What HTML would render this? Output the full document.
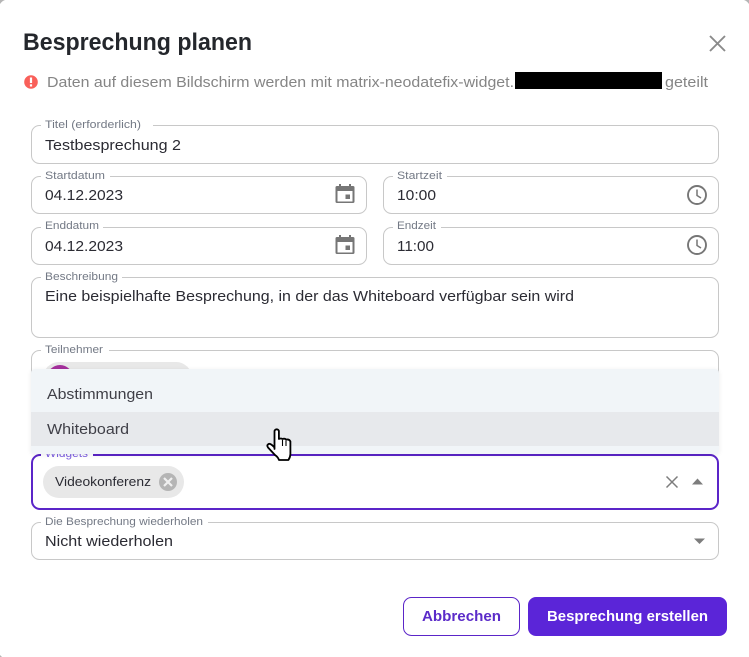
<!DOCTYPE html>
<html lang="de"><head><meta charset="utf-8"><title>Besprechung planen</title>
<style>
html,body{margin:0;padding:0;background:#fff;width:749px;height:657px;overflow:hidden}
svg{position:absolute;left:0;top:0;display:block}
text{font-family:"Liberation Sans",sans-serif}
.box{fill:#fff;stroke:#c8c8c8;stroke-width:1}
.lab{font-size:11px;fill:#737985}
.val{font-size:15px;fill:#2b2b33}
.ic{fill:#767676}
</style></head><body>
<svg width="749" height="657" viewBox="0 0 749 657" xmlns="http://www.w3.org/2000/svg">
<rect width="749" height="657" fill="#fff"/>
<path d="M0 0h5q-3 1-5 4zM749 0h-5q3 1 5 4zM0 657v-2l2 2z" fill="#b5b5b5"/>

<text x="23" y="50" font-size="24" font-weight="700" fill="#24272c" textLength="229" lengthAdjust="spacingAndGlyphs">Besprechung planen</text>
<path d="M710 36l15 15M725 36l-15 15" stroke="#8a8a8a" stroke-width="1.900" fill="none"/>

<circle cx="31" cy="82" r="6.800" fill="#f9605a"/>
<rect x="29.900" y="77.500" width="2.200" height="5.500" fill="#fff"/><rect x="29.900" y="84.300" width="2.200" height="2.200" fill="#fff"/>
<text x="47" y="87" font-size="15" fill="#858585" textLength="467" lengthAdjust="spacingAndGlyphs">Daten auf diesem Bildschirm werden mit matrix-neodatefix-widget.</text>
<rect x="515" y="72" width="147" height="17" fill="#000"/>
<text x="665" y="87" font-size="15" fill="#858585" textLength="43" lengthAdjust="spacingAndGlyphs">geteilt</text>

<!-- Titel -->
<rect class="box" x="31.500" y="125.500" width="687" height="38" rx="8"/>
<rect x="41" y="120" width="112" height="10" fill="#fff"/>
<text class="lab" x="45" y="128" textLength="96" lengthAdjust="spacingAndGlyphs">Titel (erforderlich)</text>
<text class="val" x="45" y="150" textLength="136" lengthAdjust="spacingAndGlyphs">Testbesprechung 2</text>

<!-- Startdatum -->
<rect class="box" x="31.500" y="176.500" width="335" height="37" rx="8"/>
<rect x="41" y="171" width="69" height="10" fill="#fff"/>
<text class="lab" x="45" y="179" textLength="60" lengthAdjust="spacingAndGlyphs">Startdatum</text>
<text class="val" x="45" y="200" textLength="78" lengthAdjust="spacingAndGlyphs">04.12.2023</text>
<path class="ic" d="M339 184h2v2h8v-2h2v2h2a1.500 1.500 0 0 1 1.500 1.500v14a1.500 1.500 0 0 1-1.500 1.500h-16a1.500 1.500 0 0 1-1.500-1.500v-14a1.500 1.500 0 0 1 1.500-1.500h2zM337.500 191v10.500h15V191z" fill-rule="evenodd"/>
<rect class="ic" x="345.500" y="194.500" width="4.500" height="4.500"/>

<!-- Startzeit -->
<rect class="box" x="383.500" y="176.500" width="335" height="37" rx="8"/>
<rect x="393" y="171" width="54" height="10" fill="#fff"/>
<text class="lab" x="397" y="179" textLength="45" lengthAdjust="spacingAndGlyphs">Startzeit</text>
<text class="val" x="397" y="200" textLength="39" lengthAdjust="spacingAndGlyphs">10:00</text>
<circle cx="697" cy="195" r="9" fill="none" stroke="#767676" stroke-width="1.900"/>
<path d="M697 189.500v6l4 2.500" fill="none" stroke="#767676" stroke-width="1.500"/>

<!-- Enddatum -->
<rect class="box" x="31.500" y="227.500" width="335" height="37" rx="8"/>
<rect x="41" y="222" width="62" height="10" fill="#fff"/>
<text class="lab" x="45" y="229" textLength="54" lengthAdjust="spacingAndGlyphs">Enddatum</text>
<text class="val" x="45" y="251" textLength="78" lengthAdjust="spacingAndGlyphs">04.12.2023</text>
<g transform="translate(0 51)">
<path class="ic" d="M339 184h2v2h8v-2h2v2h2a1.500 1.500 0 0 1 1.500 1.500v14a1.500 1.500 0 0 1-1.500 1.500h-16a1.500 1.500 0 0 1-1.500-1.500v-14a1.500 1.500 0 0 1 1.500-1.500h2zM337.500 191v10.500h15V191z" fill-rule="evenodd"/>
<rect class="ic" x="345.500" y="194.500" width="4.500" height="4.500"/>
</g>

<!-- Endzeit -->
<rect class="box" x="383.500" y="227.500" width="335" height="37" rx="8"/>
<rect x="393" y="222" width="48" height="10" fill="#fff"/>
<text class="lab" x="397" y="229" textLength="39" lengthAdjust="spacingAndGlyphs">Endzeit</text>
<text class="val" x="397" y="251" textLength="37" lengthAdjust="spacingAndGlyphs">11:00</text>
<circle cx="697" cy="245" r="9" fill="none" stroke="#767676" stroke-width="1.900"/>
<path d="M697 239.500v6l4 2.500" fill="none" stroke="#767676" stroke-width="1.500"/>

<!-- Beschreibung -->
<rect class="box" x="31.500" y="277.500" width="687" height="60" rx="8"/>
<rect x="41" y="272" width="81" height="10" fill="#fff"/>
<text class="lab" x="45" y="280" textLength="73" lengthAdjust="spacingAndGlyphs">Beschreibung</text>
<text class="val" x="45" y="301" textLength="529" lengthAdjust="spacingAndGlyphs">Eine beispielhafte Besprechung, in der das Whiteboard verfügbar sein wird</text>

<!-- Teilnehmer -->
<rect class="box" x="31.500" y="350.500" width="687" height="60" rx="8"/>
<rect x="41" y="345" width="68" height="10" fill="#fff"/>
<text class="lab" x="45" y="353" textLength="58" lengthAdjust="spacingAndGlyphs">Teilnehmer</text>
<rect x="43" y="362" width="149" height="32" rx="16" fill="#e8e8e8"/>
<circle cx="60" cy="378" r="13" fill="#a4309c"/>

<!-- Widgets -->
<rect x="32" y="455" width="686" height="54" rx="8" fill="#fff" stroke="#5b25c8" stroke-width="2"/>
<rect x="41" y="448" width="52" height="10" fill="#fff"/>
<text x="45" y="457" font-size="11" fill="#7a5ce0" textLength="43" lengthAdjust="spacingAndGlyphs">Widgets</text>
<rect x="43" y="466" width="141" height="32" rx="16" fill="#e8e8e8"/>
<text x="55" y="486" font-size="13" fill="#2b2b33" textLength="96" lengthAdjust="spacingAndGlyphs">Videokonferenz</text>
<circle cx="168" cy="482" r="9" fill="#b5b5b5"/>
<path d="M164 478l8 8M172 478l-8 8" stroke="#f0f0f0" stroke-width="2.200"/>
<path d="M666.500 476.500l11 11M677.500 476.500l-11 11" stroke="#7d7d7d" stroke-width="1.500"/>
<path d="M692 484.500l5.500-6 5.500 6z" fill="#7d7d7d"/>

<!-- Popup -->
<rect x="31" y="369" width="688" height="85" rx="4" fill="#f1f5f8" style="filter:drop-shadow(0 1px 2px rgba(0,0,0,.08))"/>
<rect x="31" y="412" width="688" height="34" fill="#e7e9ec"/>
<text x="47" y="399" font-size="15" fill="#3f3f47" textLength="106" lengthAdjust="spacingAndGlyphs">Abstimmungen</text>
<text x="47" y="434" font-size="15" fill="#3f3f47" textLength="82" lengthAdjust="spacingAndGlyphs">Whiteboard</text>

<!-- Wiederholen -->
<rect class="box" x="31.500" y="522.500" width="687" height="37" rx="8"/>
<rect x="41" y="517" width="167" height="10" fill="#fff"/>
<text class="lab" x="45" y="525" textLength="158" lengthAdjust="spacingAndGlyphs">Die Besprechung wiederholen</text>
<text class="val" x="45" y="546" textLength="128" lengthAdjust="spacingAndGlyphs">Nicht wiederholen</text>
<path d="M694 538.500l5.500 5.500 5.500-5.500z" fill="#7d7d7d"/>

<!-- Buttons -->
<rect x="403.500" y="597.500" width="116" height="38" rx="8" fill="#fff" stroke="#5b25c8"/>
<text x="422" y="621" font-size="15" font-weight="700" fill="#5b2bc9" textLength="79" lengthAdjust="spacingAndGlyphs">Abbrechen</text>
<rect x="528" y="597" width="199" height="39" rx="8" fill="#5b25d8"/>
<text x="547" y="621" font-size="15" font-weight="700" fill="#fff" textLength="161" lengthAdjust="spacingAndGlyphs">Besprechung erstellen</text>

<!-- Cursor -->
<path d="M274.500 449V431.500a2.200 2.200 0 0 1 4.400 0V439q2-1 3.500 0q2.500-.8 3.500.5q3.500-.5 4.500 2V454q0 3-2 6H279q-1-3-4-5l-7-7.500q-1.500-2 .5-3.500q2-1 6 3.500z" fill="#fff" stroke="#000" stroke-width="1.800" stroke-linejoin="round"/>
<path d="M282.500 440v6M286 440.500v5.500" stroke="#000" stroke-width="1.100" fill="none"/>
</svg>
</body></html>
